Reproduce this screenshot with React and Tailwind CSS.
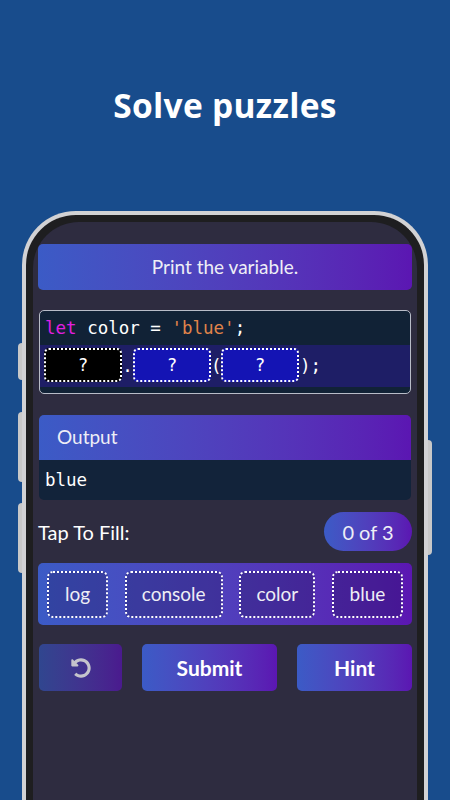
import { FaUndoAlt } from 'react-icons/fa'

const ui = { fontFamily: 'Lato, "Noto Sans", sans-serif' }
const mono = { fontFamily: '"DejaVu Sans Mono", monospace' }

const Blank = ({ dark }) => (
  <div
    className={`w-[78px] h-[34px] rounded-[5px] border-2 border-dotted border-white flex items-center justify-center text-white ${dark ? 'bg-black' : 'bg-[#1414b4]'}`}
  >
    ?
  </div>
)

const Chip = ({ label, w }) => (
  <div
    className={`${w} h-[47px] rounded-[6px] border-2 border-dotted border-white bg-[#1a1050]/30 flex items-center justify-center text-[19px] text-[#eeeef5]`}
  >
    {label}
  </div>
)

export default function App() {
  return (
    <div className="w-[450px] h-[800px] bg-[#184c8c] overflow-hidden relative flex flex-col" style={ui}>
      <div className="h-[211px] flex items-center justify-center">
        <h1
          className="text-white text-[33.5px] font-bold tracking-[0.3px]"
          style={{ fontFamily: '"Open Sans", sans-serif' }}
        >
          Solve puzzles
        </h1>
      </div>

      <div className="relative mx-[22px] flex-1">
        {/* side buttons */}
        <div className="absolute -left-[4px] top-[132px] w-[4px] h-[37px] bg-[#c8c8c8] rounded-l-sm" />
        <div className="absolute -left-[4px] top-[201px] w-[4px] h-[70px] bg-[#c8c8c8] rounded-l-sm" />
        <div className="absolute -left-[4px] top-[292px] w-[4px] h-[70px] bg-[#c8c8c8] rounded-l-sm" />
        <div className="absolute -right-[4px] top-[229px] w-[4px] h-[115px] bg-[#c8c8c8] rounded-r-sm" />

        <div className="relative h-full rounded-t-[54px] border-[4px] border-b-0 border-[#d2d2d4] bg-[#1e1e20]">
          <div className="h-full mx-[7px] mt-[7px] rounded-t-[46px] bg-[#2e2c40] px-[5px] pt-[22px]">
            <div className="h-[46px] rounded-[5px] bg-gradient-to-r from-[#3b5bc6] to-[#5b16b2] flex items-center justify-center text-[19px] text-[#eeeef6]">
              Print the variable.
            </div>

            <div className="mt-[20px] mx-[1px] rounded-[5px] border border-[#b8bcc8] overflow-hidden bg-[#112236] pb-[6px] text-[17.5px]" style={mono}>
              <div className="h-[34px] flex items-center pl-[5px] text-white whitespace-pre">
                <span className="text-[#e01ee0]">let</span>
                <span>{' color = '}</span>
                <span className="text-[#e0844a]">'blue'</span>
                <span>;</span>
              </div>
              <div className="h-[42px] bg-[#1e1e66] flex items-start pt-[3px] pl-[4px] text-white">
                <Blank dark />
                <span className="w-[11px] text-center mt-[5px]">.</span>
                <Blank />
                <span className="w-[10px] text-center mt-[5px]">(</span>
                <Blank />
                <span className="mt-[5px] pl-[1px]">);</span>
              </div>
            </div>

            <div className="mt-[21px] mx-[1px] rounded-[5px] overflow-hidden">
              <div className="h-[45px] bg-gradient-to-r from-[#3b5bc6] to-[#5b16b2] flex items-center pl-[18px] text-[19px] text-[#eeeef6]">
                Output
              </div>
              <div className="h-[40px] bg-[#12233a] flex items-center pl-[6px] text-[17.5px] text-white" style={mono}>
                blue
              </div>
            </div>

            <div className="mt-[12px] flex items-center justify-between">
              <span className="text-[20px] text-white">Tap To Fill:</span>
              <div className="w-[88px] h-[39px] rounded-full bg-gradient-to-r from-[#3b5bc6] to-[#5b16b2] flex items-center justify-center text-[20px] text-[#eeeef6]">
                0 of 3
              </div>
            </div>

            <div className="mt-[12px] h-[62px] rounded-[5px] bg-gradient-to-r from-[#3b5bc6] to-[#5b16b2] flex items-center justify-between pl-[9px] pr-[9px]">
              <Chip label="log" w="w-[61px]" />
              <Chip label="console" w="w-[98px]" />
              <Chip label="color" w="w-[76px]" />
              <Chip label="blue" w="w-[71px]" />
            </div>

            <div className="mt-[19px] flex items-center gap-[20px] pl-[1px]">
              <div className="w-[83px] h-[47px] rounded-[5px] bg-gradient-to-r from-[#30468f] to-[#4a1a8e] flex items-center justify-center">
                <FaUndoAlt className="text-[#c4c4cc]" size={20} />
              </div>
              <div className="w-[135px] h-[47px] rounded-[5px] bg-gradient-to-r from-[#3b5bc6] to-[#5b16b2] flex items-center justify-center text-[21px] font-bold text-white">
                Submit
              </div>
              <div className="w-[115px] h-[47px] rounded-[5px] bg-gradient-to-r from-[#3b5bc6] to-[#5b16b2] flex items-center justify-center text-[21px] font-bold text-white">
                Hint
              </div>
            </div>
          </div>
        </div>
      </div>
    </div>
  )
}
